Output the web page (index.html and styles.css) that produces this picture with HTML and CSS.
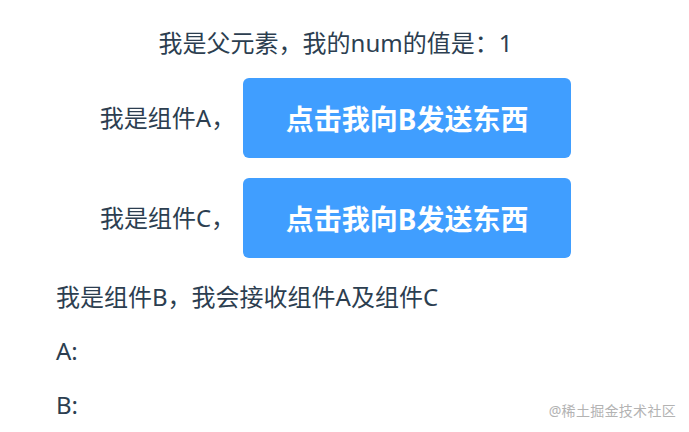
FILE: index.html
```html
<!DOCTYPE html>
<html lang="zh-CN">
<head>
<meta charset="utf-8">
<title>父子组件通信</title>
<link rel="stylesheet" href="styles.css">
</head>
<body>
  <div class="app">
    <div class="parent">
      <p class="parent-title">我是父元素，我的num的值是：1</p>
      <div class="comp-row">
        <span class="comp-label">我是组件A，</span>
        <button class="send-btn" type="button">点击我向B发送东西</button>
      </div>
      <div class="comp-row">
        <span class="comp-label">我是组件C，</span>
        <button class="send-btn" type="button">点击我向B发送东西</button>
      </div>
    </div>
    <div class="receiver">
      <p class="line">我是组件B，我会接收组件A及组件C</p>
      <p class="line">A:</p>
      <p class="line">B:</p>
    </div>
  </div>
  <div class="watermark">@稀土掘金技术社区</div>
</body>
</html>
```
FILE: styles.css
```css
html, body {
  margin: 0;
  padding: 0;
  background: #ffffff;
}

body {
  font-family: "Noto Sans", "Noto Sans CJK SC", sans-serif;
  color: #2c3e50;
  font-size: 24px;
  -webkit-font-smoothing: antialiased;
}

.app {
  width: 671px;
  padding-top: 27px;
}

.parent {
  display: flex;
  flex-direction: column;
  align-items: center;
  gap: 20px;
}

.parent-title {
  margin: 0 0 -1px;
  line-height: 32px;
}

.comp-row {
  display: flex;
  align-items: center;
  gap: 8px;
}

.comp-label {
  line-height: 32px;
}

.send-btn {
  width: 328px;
  height: 80px;
  border: none;
  border-radius: 6px;
  background: #409eff;
  color: #ffffff;
  font-family: inherit;
  font-size: 28px;
  font-weight: 700;
  cursor: pointer;
}

.receiver {
  padding-left: 56px;
  margin-top: 23px;
  display: flex;
  flex-direction: column;
  gap: 22px;
}

.line {
  margin: 0;
  line-height: 32px;
}

.watermark {
  position: absolute;
  right: 13px;
  bottom: 12px;
  font-size: 14px;
  color: #b3b3b3;
  letter-spacing: 0.3px;
}
```
